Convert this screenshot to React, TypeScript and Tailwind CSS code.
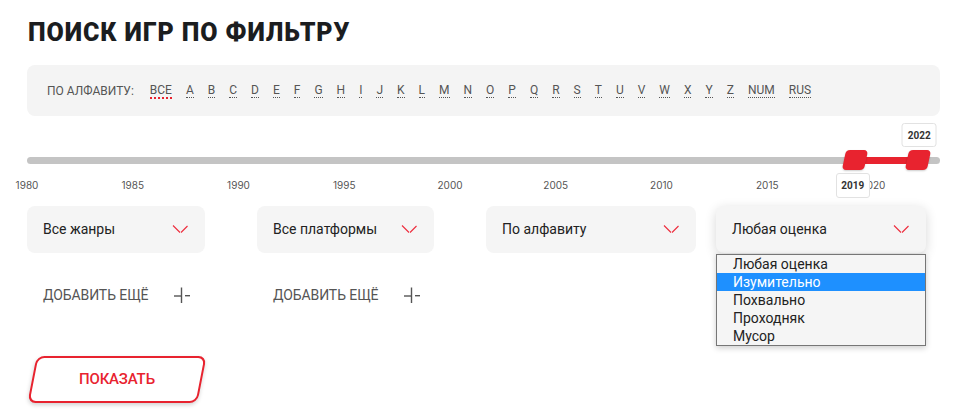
import React from "react";

const letters = ["ВСЕ","A","B","C","D","E","F","G","H","I","J","K","L","M","N","O","P","Q","R","S","T","U","V","W","X","Y","Z","NUM","RUS"];
const years = [1980,1985,1990,1995,2000,2005,2010,2015,2020];
const PX = 21.15;
const pos = (v: number) => (v - 1980) * PX;

function Chevron() {
  return (
    <svg width="17" height="11" viewBox="0 0 17 11" className="shrink-0">
      <path d="M1 1.5 L8 8.5" stroke="#ee2a3a" strokeWidth="1.1" fill="none" />
      <path d="M9 8.5 L15.5 2" stroke="#ee2a3a" strokeWidth="1.1" fill="none" />
    </svg>
  );
}

function PlusIcon() {
  return (
    <svg width="17" height="17" viewBox="0 0 17 17" className="shrink-0">
      <path d="M7.5 0.5 V16" stroke="#555" strokeWidth="1.4" fill="none" />
      <path d="M0 9 H7.5" stroke="#555" strokeWidth="1.4" fill="none" />
      <path d="M11 8.7 H16" stroke="#555" strokeWidth="1.4" fill="none" />
    </svg>
  );
}

function Select({ label, w, open }: { label: string; w: string; open?: boolean }) {
  return (
    <div className={`${w} h-[47px] bg-[#f5f5f5] rounded-[8px] flex items-center justify-between pl-[16px] pr-[16px] text-[14px] text-[#222] ${open ? "shadow-[0_3px_12px_rgba(0,0,0,0.16)]" : ""}`}>
      <span>{label}</span>
      <Chevron />
    </div>
  );
}

function AddMore() {
  return (
    <div className="flex items-center pl-[16px] w-[178px] justify-between pr-[14px]">
      <span className="text-[14px] text-[#555] tracking-[-0.1px]">ДОБАВИТЬ ЕЩЁ</span>
      <PlusIcon />
    </div>
  );
}

export default function App() {
  return (
    <div className="w-[969px] h-[415px] bg-white relative overflow-hidden font-['Roboto',sans-serif]">
      <div className="pl-[27px] pr-[29px] pt-[18px]">
        <h1 className="text-[25px] font-black leading-[29px] text-[#1b1d1f] ml-[1px] tracking-[0.9px]">ПОИСК ИГР ПО ФИЛЬТРУ</h1>

        <div className="mt-[18px] h-[51px] bg-[#f4f4f4] rounded-[8px] flex items-center pl-[20px] text-[12px] text-[#555]">
          <span className="mr-[16px]">ПО АЛФАВИТУ:</span>
          <div className="flex gap-[14px] items-start">
            {letters.map((l, i) => (
              <span
                key={l}
                className={
                  i === 0
                    ? "leading-[14px] border-b-2 border-dotted border-[#e8232f] text-[#555]"
                    : "leading-[14px] border-b border-dotted border-[#555] text-[#555]"
                }
              >
                {l}
              </span>
            ))}
          </div>
        </div>

        <div className="relative h-[90px]">
          <div className="absolute left-0 right-0 top-[41px] h-[7px] rounded-full bg-[#c4c4c4]" />
          <div
            className="absolute top-[41px] h-[7px] bg-[#e8232f]"
            style={{ left: pos(2019) + 1, width: pos(2022) - pos(2019) }}
          />
          {years.map((y) => (
            <span
              key={y}
              className="absolute top-[63px] -translate-x-1/2 text-[10px] leading-[12px] text-[#555] font-['Inter',sans-serif]"
              style={{ left: pos(y) }}
            >
              {y}
            </span>
          ))}
          {[2019, 2022].map((y) => (
            <div
              key={y}
              className="absolute top-[34px] w-[22px] h-[20px] -translate-x-1/2 -skew-x-[12deg] rounded-[4px] bg-[#e8232f] shadow-[0_1px_2px_rgba(0,0,0,0.2)]"
              style={{ left: pos(y) + 3 }}
            />
          ))}
          <div
            className="absolute top-[7px] w-[35px] h-[24px] -translate-x-1/2 bg-white border border-[#e2e2e2] rounded-[3px] flex items-center justify-center text-[10px] font-bold text-[#333]"
            style={{ left: pos(2022) + 4 }}
          >
            2022
          </div>
          <div
            className="absolute top-[57px] w-[34px] h-[25px] -translate-x-1/2 bg-white border border-[#e2e2e2] rounded-[3px] flex items-center justify-center text-[10px] font-bold text-[#333]"
            style={{ left: pos(2019) + 1 }}
          >
            2019
          </div>
        </div>

        <div className="grid grid-cols-[230px_229px_230px_210px]">
          <Select label="Все жанры" w="w-[178px]" />
          <Select label="Все платформы" w="w-[177px]" />
          <Select label="По алфавиту" w="w-[210px]" />
          <div className="relative">
            <Select label="Любая оценка" w="w-[210px]" open />
            <div className="absolute left-0 top-[48px] w-[210px] bg-[#f5f5f5] border border-[#767676] shadow-[0_2px_6px_rgba(0,0,0,0.2)] text-[14px] text-[#222] z-10">
              {["Любая оценка", "Изумительно", "Похвально", "Проходняк", "Мусор"].map((o, i) => (
                <div
                  key={o}
                  className={`h-[18px] leading-[18px] pl-[16px] ${i === 1 ? "bg-[#1e90ff] text-white" : ""}`}
                >
                  {o}
                </div>
              ))}
            </div>
          </div>
        </div>

        <div className="mt-[32px] h-[20px] grid grid-cols-[230px_229px]">
          <AddMore />
          <AddMore />
        </div>

        <div className="mt-[51px] ml-[5px]">
          <button className="w-[170px] h-[47px] -skew-x-[11deg] border-2 border-[#e8232f] rounded-[8px] bg-white shadow-[0_2px_4px_rgba(0,0,0,0.18)] flex items-center justify-center">
            <span className="skew-x-[11deg] text-[15px] font-medium text-[#e8232f] tracking-[-0.2px]">ПОКАЗАТЬ</span>
          </button>
        </div>
      </div>
    </div>
  );
}
